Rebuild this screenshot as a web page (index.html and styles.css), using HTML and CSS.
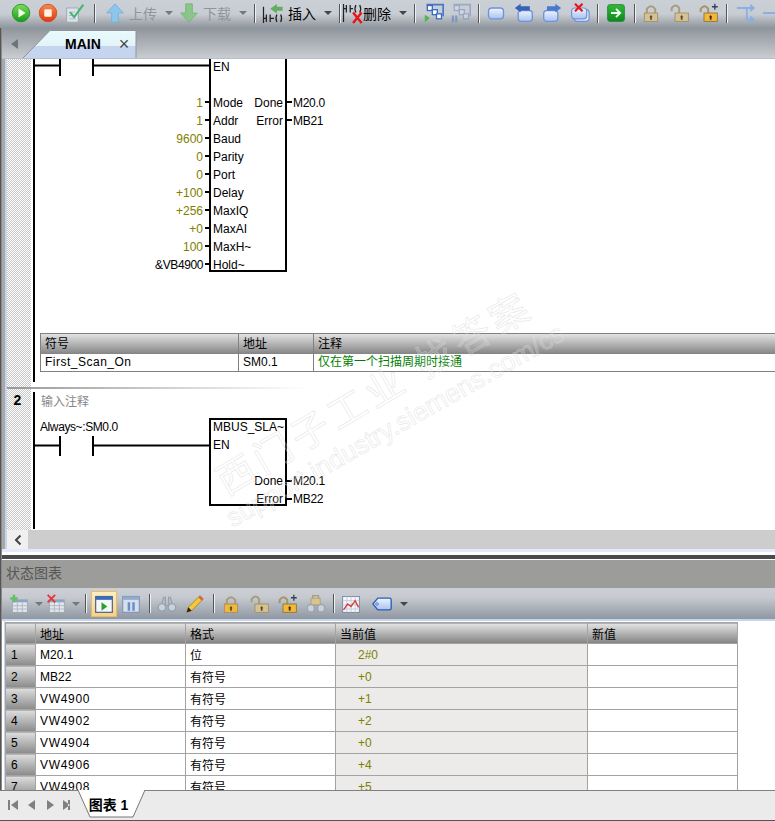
FILE: index.html
```html
<!DOCTYPE html>
<html lang="zh">
<head>
  <meta charset="UTF-8" />
  <title>MAIN</title>
  <link rel="stylesheet" href="styles.css">
</head>
<body>
  <!-- общие иконки -->
  <svg class="defs" aria-hidden="true">
    <defs>
      <linearGradient id="gGreen" x1="0" y1="0" x2="0" y2="1"><stop offset="0" stop-color="#7fdc5a"/><stop offset="1" stop-color="#169a1f"/></linearGradient>
      <linearGradient id="gRed" x1="0" y1="0" x2="0" y2="1"><stop offset="0" stop-color="#f58a4c"/><stop offset="1" stop-color="#e0380f"/></linearGradient>
      <linearGradient id="gBox" x1="0" y1="0" x2="0" y2="1"><stop offset="0" stop-color="#eef4ff"/><stop offset="1" stop-color="#a9c3f0"/></linearGradient>
      <linearGradient id="gGo" x1="0" y1="0" x2="0" y2="1"><stop offset="0" stop-color="#35b83c"/><stop offset="1" stop-color="#0f8a1c"/></linearGradient>
      <linearGradient id="gMainTab" x1="0" y1="0" x2="0" y2="1"><stop offset="0" stop-color="#e9fbff"/><stop offset=".55" stop-color="#e4f3f8"/><stop offset=".56" stop-color="#c5d5f0"/><stop offset="1" stop-color="#c5d5f0"/></linearGradient>

      <symbol id="i-play" viewBox="0 0 24 24"><circle cx="12" cy="12" r="10.5" fill="url(#gGreen)" stroke="#1f8f22"/><path d="M9 6.5 17.5 12 9 17.5Z" fill="#f2ffe8"/></symbol>
      <symbol id="i-stop" viewBox="0 0 24 24"><circle cx="12" cy="12" r="10.5" fill="url(#gRed)" stroke="#cf4a16"/><rect x="7.5" y="7.5" width="9" height="9" rx="1.5" fill="#fff1e6"/></symbol>
      <symbol id="i-check" viewBox="0 0 24 24"><path d="M2 6H16V23H2Z" fill="#dde3ec" stroke="#98a2b0"/><path d="M5 11H12M5 15H12M5 19H13" stroke="#a9b3c0"/><path d="M6 11 11 17 22 2" fill="none" stroke="#43b86c" stroke-width="2.4"/></symbol>
      <symbol id="i-up" viewBox="0 0 24 24"><path d="M12 1 22 12H16V23H8V12H2Z" fill="#8cc6ec" stroke="#74aed8"/></symbol>
      <symbol id="i-down" viewBox="0 0 24 24"><path d="M8 1H16V12H22L12 23 2 12H8Z" fill="#8ac58a" stroke="#77b377"/></symbol>
      <symbol id="i-insert" viewBox="0 0 24 22"><path d="M1 4V21M1 16H4M4 12V20M8 12V20M8 16H12" fill="none" stroke="#222" stroke-width="1.3"/><path d="M15 12Q13 16 15 20M19 12Q21 16 19 20" fill="none" stroke="#222" stroke-width="1.3"/><path d="M15 1 8 6 15 11V8H21V4H15Z" fill="#62ad5f"/></symbol>
      <symbol id="i-delete" viewBox="0 0 24 22"><path d="M1 1V20M1 6H4M4 2V10M8 2V10M8 6H11M14 2Q12 6 14 10M18 2Q20 6 18 10" fill="none" stroke="#222" stroke-width="1.3"/><path d="M11 10 20 21M20 10 11 21" stroke="#e8141c" stroke-width="2.6"/></symbol>
      <symbol id="i-net" viewBox="0 0 24 24"><path d="M3 2H23V16" fill="none" stroke="#4677cc" stroke-width="2"/><rect x="4" y="3" width="6" height="6" fill="#fff" stroke="#3a6cc4" stroke-width="1.6"/><rect x="10" y="8" width="6" height="6" fill="#fff" stroke="#3a6cc4" stroke-width="1.6"/><rect x="15" y="13" width="6" height="6" fill="#fff" stroke="#3a6cc4" stroke-width="1.6"/><path d="M1 14 7 18 1 23Z" fill="#4cb54c"/></symbol>
      <symbol id="i-net-off" viewBox="0 0 24 24"><g opacity=".6"><path d="M3 2H23V16" fill="none" stroke="#7c94bc" stroke-width="2"/><rect x="4" y="3" width="6" height="6" fill="#d8dfea" stroke="#7c94bc" stroke-width="1.6"/><rect x="10" y="8" width="6" height="6" fill="#d8dfea" stroke="#7c94bc" stroke-width="1.6"/><rect x="15" y="13" width="6" height="6" fill="#d8dfea" stroke="#7c94bc" stroke-width="1.6"/><path d="M1 15H3.6V23H1ZM5 15H7.6V23H5Z" fill="#5b83c4"/></g></symbol>
      <symbol id="i-box" viewBox="0 0 24 24"><rect x="3" y="6" width="18" height="13" rx="4" fill="url(#gBox)" stroke="#6f93d6" stroke-width="1.6"/></symbol>
      <symbol id="i-box-left" viewBox="0 0 24 24"><rect x="5" y="9" width="17" height="13" rx="4" fill="url(#gBox)" stroke="#6f93d6" stroke-width="1.6"/><path d="M1 6 8 1V4H19V9H8V11Z" fill="#3562b8"/></symbol>
      <symbol id="i-box-right" viewBox="0 0 24 24"><rect x="2" y="9" width="17" height="13" rx="4" fill="url(#gBox)" stroke="#6f93d6" stroke-width="1.6"/><path d="M23 6 16 1V4H6V9H16V11Z" fill="#4a78cc"/></symbol>
      <symbol id="i-box-del" viewBox="0 0 24 24"><rect x="5" y="8" width="18" height="14" rx="4" fill="#d8e4f8" stroke="#6f93d6" stroke-width="1.4"/><rect x="2" y="6" width="18" height="13" rx="4" fill="url(#gBox)" stroke="#6f93d6" stroke-width="1.4"/><path d="M6 1 15 10M15 1 6 10" stroke="#e8141c" stroke-width="2.6"/></symbol>
      <symbol id="i-go" viewBox="0 0 24 24"><rect x="2" y="2" width="20" height="20" rx="2.5" fill="url(#gGo)" stroke="#138024"/><path d="M6 12H16M12 7 17 12 12 17" fill="none" stroke="#f2fff2" stroke-width="2.2"/></symbol>
      <symbol id="i-lock" viewBox="0 0 24 24"><path d="M7 13V7Q12 1 17 7V13" fill="none" stroke="#a99c7c" stroke-width="2.4"/><rect x="4" y="12" width="16" height="10" fill="currentColor" stroke="#a08c5c"/><path d="M12 14.5 14 17H13V20H11V17H10Z" fill="#5b4a20"/></symbol>
      <symbol id="i-lock-open" viewBox="0 0 24 24"><path d="M2 10V6Q7 0 11 6V13" fill="none" stroke="#a99c7c" stroke-width="2.4"/><rect x="6" y="12" width="16" height="10" fill="currentColor" stroke="#a08c5c"/><path d="M14 14.5 16 17H15V20H13V17H12Z" fill="#5b4a20"/></symbol>
      <symbol id="i-lock-plus" viewBox="0 0 24 24"><path d="M2 11V7Q7 1 11 7V13" fill="none" stroke="#a5956d" stroke-width="2.4"/><rect x="6" y="12" width="16" height="10" fill="currentColor" stroke="#8a7136"/><path d="M14 14.5 16 17H15V20H13V17H12Z" fill="#3d2c06"/><path d="M19 1V8M15.5 4.5H22.5" stroke="#33415c" stroke-width="1.6"/></symbol>
      <symbol id="i-branch" viewBox="0 0 24 24"><path d="M1 6H13V20H19M13 6H19" fill="none" stroke="#8daee2" stroke-width="2.2"/><path d="M17 1 23 6 17 11ZM17 15 23 20 17 25Z" fill="#8daee2"/></symbol>
      <symbol id="i-table-add" viewBox="0 0 24 24"><rect x="4" y="7" width="18" height="15" fill="#e3e7ec" stroke="#9aa4b0"/><rect x="4" y="7" width="18" height="3" fill="#8ea6c4"/><path d="M4 14H22M4 18H22M10 10V22M16 10V22" stroke="#aab2bc"/><path d="M6 1V10M1.5 5.5H10.5" stroke="#66bf66" stroke-width="3"/></symbol>
      <symbol id="i-table-del" viewBox="0 0 24 24"><rect x="4" y="7" width="18" height="15" fill="#e3e7ec" stroke="#9aa4b0"/><rect x="4" y="7" width="18" height="3" fill="#8ea6c4"/><path d="M4 14H22M4 18H22M10 10V22M16 10V22" stroke="#aab2bc"/><path d="M2 1 11 10M11 1 2 10" stroke="#e8383c" stroke-width="2.4"/></symbol>
      <symbol id="i-win-play" viewBox="0 0 24 24"><rect x="2" y="3" width="20" height="19" fill="#f4f7fc" stroke="#44628e" stroke-width="1.4"/><rect x="2" y="3" width="20" height="4" fill="#3c6cb8"/><path d="M9 10 16 15 9 20Z" fill="#2aa22a"/></symbol>
      <symbol id="i-win-pause" viewBox="0 0 24 24"><rect x="2" y="3" width="20" height="19" fill="#d6dfec" stroke="#7f96b8" stroke-width="1.4"/><rect x="2" y="3" width="20" height="4" fill="#92aad0"/><path d="M8 10H11V20H8ZM13.5 10H16.5V20H13.5Z" fill="#6b8ec6"/></symbol>
      <symbol id="i-binoc" viewBox="0 0 24 24"><g fill="none" stroke="#98a2ae" stroke-width="1.6"><circle cx="6" cy="16" r="4.5" fill="#c9d2dc"/><circle cx="18" cy="16" r="4.5" fill="#c9d2dc"/><path d="M6 11 8 4H10V14H14V4H16L18 11"/></g></symbol>
      <symbol id="i-binoc-lock" viewBox="0 0 24 24"><g fill="none" stroke="#9aa3ae" stroke-width="1.6"><circle cx="6" cy="17" r="4.5" fill="#c9d2dc"/><circle cx="18" cy="17" r="4.5" fill="#c9d2dc"/><path d="M10 13H14V22H10Z"/></g><rect x="6" y="5" width="11" height="8" fill="#d9c48c" stroke="#a99c7c"/><path d="M8 5V2H15V5" fill="none" stroke="#a99c7c" stroke-width="1.6"/></symbol>
      <symbol id="i-pencil" viewBox="0 0 24 24"><path d="M18 2 22 6 8 20 2 22 4 16Z" fill="#f2c93c" stroke="#a8801c"/><path d="M18 2 22 6 20 8 16 4Z" fill="#d8604c"/><path d="M4 16 2 22 8 20Z" fill="#222"/></symbol>
      <symbol id="i-chart" viewBox="0 0 24 24"><rect x="2" y="3" width="20" height="19" fill="#f4f6fa" stroke="#6d7f9c"/><path d="M2 8H22M2 13H22M2 18H22M7 3V22M12 3V22M17 3V22" stroke="#c0c8d6"/><path d="M3 19 8 12 12 15 17 8 21 16" fill="none" stroke="#d83838" stroke-width="1.6"/></symbol>
      <symbol id="i-tag" viewBox="0 0 24 24"><path d="M7 5H21Q23 5 23 7V17Q23 19 21 19H7L1 12Z" fill="url(#gBox)" stroke="#2c5cb4" stroke-width="1.6"/><circle cx="6" cy="12" r="1.5" fill="#fff" stroke="#2c5cb4"/></symbol>
    </defs>
  </svg>

  <div class="toolbar main-bar">
    <span class="btn w27"><svg class="ico"><use href="#i-play"/></svg></span>
    <span class="btn w27"><svg class="ico"><use href="#i-stop"/></svg></span>
    <span class="btn w27"><svg class="ico"><use href="#i-check"/></svg></span>
    <span class="sep w13"></span>
    <span class="btn w28"><svg class="ico"><use href="#i-up"/></svg></span>
    <span class="label off">上传</span><span class="caret off"></span>
    <span class="btn w28"><svg class="ico"><use href="#i-down"/></svg></span>
    <span class="label off">下载</span><span class="caret off"></span>
    <span class="sep w11"></span>
    <span class="btn w28"><svg class="ico ico-wide"><use href="#i-insert"/></svg></span>
    <span class="label">插入</span><span class="caret"></span>
    <span class="sep w11"></span>
    <span class="btn w18"><svg class="ico ico-wide"><use href="#i-delete"/></svg></span>
    <span class="label">删除</span><span class="caret"></span>
    <span class="sep w11"></span>
    <span class="btn w27"><svg class="ico"><use href="#i-net"/></svg></span>
    <span class="btn w27"><svg class="ico"><use href="#i-net-off"/></svg></span>
    <span class="sep w8"></span>
    <span class="btn w28"><svg class="ico"><use href="#i-box"/></svg></span>
    <span class="btn w28"><svg class="ico"><use href="#i-box-left"/></svg></span>
    <span class="btn w28"><svg class="ico"><use href="#i-box-right"/></svg></span>
    <span class="btn w28"><svg class="ico"><use href="#i-box-del"/></svg></span>
    <span class="sep w6"></span>
    <span class="btn w32"><svg class="ico"><use href="#i-go"/></svg></span>
    <span class="sep w5"></span>
    <span class="btn w28 tan"><svg class="ico"><use href="#i-lock"/></svg></span>
    <span class="btn w29 tan"><svg class="ico"><use href="#i-lock-open"/></svg></span>
    <span class="btn w29 gold"><svg class="ico"><use href="#i-lock-plus"/></svg></span>
    <span class="sep w6"></span>
    <span class="btn w34"><svg class="ico"><use href="#i-branch"/></svg></span>
    <span class="dash"></span>
  </div>

  <div class="tab-strip">
    <span class="strip-arrow"></span>
    <div class="main-tab">
      <svg class="tab-shape" viewBox="0 0 114 28"><path d="M0 28 27 .5H113V28" fill="url(#gMainTab)" stroke="#8f949c"/></svg>
      <span class="tab-name">MAIN</span>
      <span class="tab-close">×</span>
    </div>
  </div>

  <div class="editor">
    <div class="net net-one">
      <div class="gutter"></div>
      <div class="rail rail-one">
        <div class="pin">
          <div class="pin-in"><svg class="rung" viewBox="0 0 174 20"><path d="M0 8.5H25M25 0V19M58 0V19M58 8.5H174" fill="none" stroke="#000" stroke-width="2"/></svg></div>
          <div class="pin-box"><span>EN</span></div>
        </div>
        <div class="pin"><div class="pin-in"></div><div class="pin-box"></div></div>
        <div class="pin">
          <div class="pin-in wired val">1</div>
          <div class="pin-box"><span>Mode</span><span>Done</span></div>
          <div class="pin-out wired">M20.0</div>
        </div>
        <div class="pin">
          <div class="pin-in wired val">1</div>
          <div class="pin-box"><span>Addr</span><span>Error</span></div>
          <div class="pin-out wired">MB21</div>
        </div>
        <div class="pin"><div class="pin-in wired val">9600</div><div class="pin-box"><span>Baud</span></div></div>
        <div class="pin"><div class="pin-in wired val">0</div><div class="pin-box"><span>Parity</span></div></div>
        <div class="pin"><div class="pin-in wired val">0</div><div class="pin-box"><span>Port</span></div></div>
        <div class="pin"><div class="pin-in wired val">+100</div><div class="pin-box"><span>Delay</span></div></div>
        <div class="pin"><div class="pin-in wired val">+256</div><div class="pin-box"><span>MaxIQ</span></div></div>
        <div class="pin"><div class="pin-in wired val">+0</div><div class="pin-box"><span>MaxAI</span></div></div>
        <div class="pin"><div class="pin-in wired val">100</div><div class="pin-box"><span>MaxH~</span></div></div>
        <div class="pin pin-last"><div class="pin-in wired pin-addr">&amp;VB4900</div><div class="pin-box"><span>Hold~</span></div></div>

        <div class="symbols">
          <div class="sym-head">符号</div><div class="sym-head">地址</div><div class="sym-head">注释</div>
          <div class="sym-cell sym-name">First_Scan_On</div><div class="sym-cell">SM0.1</div><div class="sym-cell sym-note">仅在第一个扫描周期时接通</div>
        </div>
      </div>
    </div>

    <div class="net-sep"></div>

    <div class="net net-two">
      <div class="gutter"><span class="net-no">2</span></div>
      <div class="rail rail-two">
        <div class="comment">输入注释</div>
        <div class="pin pin-title">
          <div class="pin-in pin-sym">Always~:SM0.0</div>
          <div class="pin-box"><span>MBUS_SLA~</span></div>
        </div>
        <div class="pin">
          <div class="pin-in"><svg class="rung" viewBox="0 0 174 20"><path d="M0 9.5H25M25 0V20M58 0V20M58 9.5H174" fill="none" stroke="#000" stroke-width="2"/></svg></div>
          <div class="pin-box"><span>EN</span></div>
        </div>
        <div class="pin"><div class="pin-in"></div><div class="pin-box"></div></div>
        <div class="pin">
          <div class="pin-in"></div>
          <div class="pin-box pin-right"><span>Done</span></div>
          <div class="pin-out wired">M20.1</div>
        </div>
        <div class="pin pin-end">
          <div class="pin-in"></div>
          <div class="pin-box pin-right"><span>Error</span></div>
          <div class="pin-out wired">MB22</div>
        </div>
      </div>
    </div>
  </div>

  <div class="hscroll">
    <div class="hscroll-btn"><svg viewBox="0 0 10 12" width="10" height="12"><path d="M7.5 1.5 3 6 7.5 10.5" fill="none" stroke="#444" stroke-width="2"/></svg></div>
  </div>
  <div class="splitter"></div>

  <div class="panel-title">状态图表</div>

  <div class="toolbar status-bar">
    <span class="btn w26"><svg class="ico"><use href="#i-table-add"/></svg></span>
    <span class="caret off c-status"></span>
    <span class="btn w26"><svg class="ico"><use href="#i-table-del"/></svg></span>
    <span class="caret off c-status"></span>
    <span class="sep w11"></span>
    <span class="btn active"><svg class="ico"><use href="#i-win-play"/></svg></span>
    <span class="btn w28"><svg class="ico"><use href="#i-win-pause"/></svg></span>
    <span class="sep w8"></span>
    <span class="btn w28"><svg class="ico"><use href="#i-binoc"/></svg></span>
    <span class="btn w28"><svg class="ico"><use href="#i-pencil"/></svg></span>
    <span class="sep w8"></span>
    <span class="btn w28 gold"><svg class="ico"><use href="#i-lock"/></svg></span>
    <span class="btn w29 tan"><svg class="ico"><use href="#i-lock-open"/></svg></span>
    <span class="btn w28 gold"><svg class="ico"><use href="#i-lock-plus"/></svg></span>
    <span class="btn w27"><svg class="ico"><use href="#i-binoc-lock"/></svg></span>
    <span class="sep w8"></span>
    <span class="btn w28"><svg class="ico"><use href="#i-chart"/></svg></span>
    <span class="btn w30"><svg class="ico"><use href="#i-tag"/></svg></span>
    <span class="caret c-status"></span>
  </div>

  <div class="grid-wrap">
    <table class="status-grid">
      <colgroup><col class="col-no"><col class="col-wide"><col class="col-wide"><col class="col-value"><col class="col-wide"></colgroup>
      <thead>
        <tr><th></th><th>地址</th><th>格式</th><th>当前值</th><th>新值</th></tr>
      </thead>
      <tbody>
        <tr><th>1</th><td>M20.1</td><td>位</td><td class="cur">2#0</td><td></td></tr>
        <tr><th>2</th><td>MB22</td><td>有符号</td><td class="cur">+0</td><td></td></tr>
        <tr><th>3</th><td class="vw">VW4900</td><td>有符号</td><td class="cur">+1</td><td></td></tr>
        <tr><th>4</th><td class="vw">VW4902</td><td>有符号</td><td class="cur">+2</td><td></td></tr>
        <tr><th>5</th><td class="vw">VW4904</td><td>有符号</td><td class="cur">+0</td><td></td></tr>
        <tr><th>6</th><td class="vw">VW4906</td><td>有符号</td><td class="cur">+4</td><td></td></tr>
        <tr><th>7</th><td class="vw">VW4908</td><td>有符号</td><td class="cur">+5</td><td></td></tr>
      </tbody>
    </table>
  </div>

  <div class="sheet-bar">
    <svg class="sheet-nav" viewBox="0 0 64 12" width="64" height="12">
      <path d="M1 1H3V11H1ZM11 1V11L4 6Z M28 1V11L21 6Z M40 1V11L47 6Z M56 1V11L63 6ZM61 1H63V11H61Z" fill="#808080"/>
    </svg>
    <div class="sheet-tab">
      <svg class="tab-shape" viewBox="0 0 68 28"><path d="M0 0 12 27H55L67 0" fill="#fff" stroke="#777"/></svg>
      <span class="sheet-name">图表 1</span>
    </div>
  </div>

  <div class="edge"></div>

  <!-- водяной знак поверх всего -->
  <div class="watermark wm-cn">西门子工业 找答案</div>
  <div class="watermark wm-url">support.industry.siemens.com/cs</div>
</body>
</html>
```

FILE: styles.css
```css
body {
  margin: 0;
  width: 775px;
  height: 821px;
  overflow: hidden;
  position: relative;
  background-color: white;
  font-family: "Liberation Sans", "Noto Sans CJK SC", sans-serif;
  font-size: 12px;
  color: #000;
}

.defs {
  position: absolute;
  width: 0;
  height: 0;
}

/* Тёмная кромка окна слева */
.edge {
  position: absolute;
  left: 0;
  top: 28px;
  bottom: 31px;
  width: 2px;
  background: linear-gradient(90deg, #555 50%, #8a8a8a 50%);
}

/* Панели инструментов */
.toolbar {
  display: flex;
  align-items: center;
  overflow: hidden;
}

.main-bar {
  height: 28px;
  padding: 0 0 2px 7px;
  box-sizing: border-box;
  background: linear-gradient(#cbd0d6, #c8ccd3 50%, #8f959c);
}

.status-bar {
  height: 33px;
  padding-left: 6px;
  box-sizing: border-box;
  border-bottom: 2px solid #c5d5ee;
  background: linear-gradient(#ccd0d6, #c6cad0 30%, #8f97a1);
}

.btn {
  display: flex;
  align-items: center;
  justify-content: center;
  flex: none;
}

.ico {
  width: 20px;
  height: 20px;
}

.ico-wide {
  flex: none;
  width: 24px;
  height: 21px;
}

.w18 { width: 18px; }
.w26 { width: 26px; }
.w27 { width: 27px; }
.w28 { width: 28px; }
.w29 { width: 29px; }
.w30 { width: 30px; margin-left: 2px; }
.w32 { width: 32px; }
.w34 { width: 34px; }

.tan { color: #d3c296; }
.gold { color: #f2b83a; }

.active {
  width: 24px;
  height: 24px;
  border: 1px solid #e8bc68;
  background: linear-gradient(#fdeec2, #fbd27e);
}

.sep {
  flex: none;
  height: 19px;
  display: flex;
  justify-content: center;
}

.sep::before {
  content: "";
  width: 1px;
  background-color: #555;
  box-shadow: 1px 0 0 #eef0f3;
}

.sep.w5 { width: 5px; }
.sep.w6 { width: 6px; }
.sep.w8 { width: 8px; }
.sep.w11 { width: 11px; }
.sep.w13 { width: 13px; }

.label {
  width: 28px;
  flex: none;
  font-size: 14px;
}

.label.off {
  color: #8e959d;
}

.caret {
  flex: none;
  width: 0;
  height: 0;
  margin: 0 2px 0 8px;
  border-left: 4.5px solid transparent;
  border-right: 4.5px solid transparent;
  border-top: 4px solid #444;
}

.caret.off {
  border-top-color: #777;
}

.c-status {
  margin: 0 0 0 3px;
}

.dash {
  flex: none;
  width: 12px;
  height: 2px;
  background-color: #8daee2;
}

/* Вкладка MAIN */
.tab-strip {
  height: 31px;
  display: flex;
  align-items: flex-end;
  box-sizing: border-box;
  border-bottom: 1px solid #b4bdd2;
  background: linear-gradient(#8f959c, #c9ccd1);
}

.strip-arrow {
  width: 0;
  height: 0;
  margin: 0 5px 9px 11px;
  border-top: 5px solid transparent;
  border-bottom: 5px solid transparent;
  border-right: 7px solid #6f747b;
}

.main-tab {
  position: relative;
  width: 114px;
  height: 28px;
  display: flex;
  align-items: center;
}

.tab-shape {
  position: absolute;
  left: 0;
  top: 0;
  width: 100%;
  height: 100%;
}

.tab-name {
  position: relative;
  margin-left: 42px;
  font-size: 14px;
  font-weight: bold;
}

.tab-close {
  position: relative;
  margin-left: 18px;
  font-size: 18px;
  color: #444;
}

/* Лестничная диаграмма */
.editor {
  height: 471px;
  overflow: hidden;
  padding-left: 7px;
  background: linear-gradient(90deg, #a8a8a8 5px, #c5d5ee 5px);
}

.net {
  display: flex;
  background-color: white;
}

.net-one {
  height: 328px;
}

.net-two {
  height: 141px;
}

.gutter {
  flex: none;
  width: 24px;
  margin-right: 2px;
  background-color: #fff;
  background-image: conic-gradient(#c8c8c8 25%, #fff 0 50%, #c8c8c8 0 75%, #fff 0);
  background-size: 2px 2px;
  text-align: center;
}

.net-no {
  display: block;
  padding-top: 3px;
  padding-right: 3px;
  font-size: 14px;
  line-height: 16px;
  font-weight: bold;
}

.rail {
  flex: 1;
  border-left: 2px solid #000;
}

.rail-one {
  height: 323px;
  overflow: hidden;
}

.rail-two {
  height: 137px;
  margin-top: 3px;
}

.net-sep {
  height: 2px;
  background: linear-gradient(90deg, #999, #fff 300px);
}

.pin {
  display: grid;
  grid-template-columns: 174px 78px 1fr;
  grid-template-rows: 100%;
  height: 18px;
  line-height: 18px;
}

.rail-one .pin {
  line-height: 20px;
}

.rail-one .pin:first-child {
  margin-top: -2px;
}

.pin-in {
  position: relative;
  padding-right: 6px;
  text-align: right;
}

.pin-addr {
  letter-spacing: -0.4px;
}

.val {
  color: #808000;
}

.pin-box {
  display: flex;
  justify-content: space-between;
  box-sizing: border-box;
  padding: 0 2px;
  border-left: 2px solid #000;
  border-right: 2px solid #000;
}

.pin-right {
  justify-content: flex-end;
}

.pin-title .pin-box {
  border-top: 2px solid #000;
  line-height: 15px;
}

.pin-last {
  height: 17px;
}

.pin-end {
  height: 16px;
}

.pin-last .pin-box,
.pin-end .pin-box {
  border-bottom: 2px solid #000;
}

.pin-out {
  position: relative;
  padding-left: 6px;
  letter-spacing: -0.3px;
}

.wired::after {
  content: "";
  position: absolute;
  top: 8px;
  width: 5px;
  height: 2px;
  background-color: #000;
}

.pin-in.wired::after {
  right: 0;
  width: 4px;
}

.pin-out.wired::after {
  left: 0;
}

.rung {
  position: absolute;
  left: 0;
  top: 0;
  width: 174px;
  height: 20px;
}

.pin-sym {
  padding-left: 5px;
  text-align: left;
  letter-spacing: -0.4px;
}

.comment {
  height: 26px;
  padding-left: 6px;
  line-height: 20px;
  color: #888;
}

/* Таблица символов */
.symbols {
  display: grid;
  grid-template-columns: 198px 75px 470px;
  margin: 61px 0 0 5px;
  border: solid #808080;
  border-width: 1px 0 1px 1px;
}

.sym-head {
  height: 20px;
  padding-left: 4px;
  line-height: 20px;
  border-right: 1px solid #808080;
  background: linear-gradient(#e2e2e4, #848484);
}

.sym-cell {
  height: 17px;
  padding-left: 4px;
  line-height: 17px;
  border-right: 1px solid #808080;
}

.sym-name {
  letter-spacing: 0.5px;
}

.sym-note {
  color: #008000;
}

/* Полоса прокрутки и разделитель */
.hscroll {
  height: 19px;
  display: flex;
  padding-left: 7px;
  background: linear-gradient(90deg, #a8a8a8 5px, #c5d5ee 5px 7px, #cdcdcd 7px);
}

.hscroll-btn {
  width: 21px;
  display: flex;
  align-items: center;
  justify-content: center;
  background-color: #f0f0f0;
}

.splitter {
  height: 11px;
  box-sizing: border-box;
  border-top: 3px solid #e4ebf8;
  border-bottom: 1px solid #fff;
  background: linear-gradient(#fff 3px, #4a4a4a 3px);
}

/* Нижняя панель */
.panel-title {
  height: 28px;
  padding-left: 6px;
  line-height: 27px;
  font-size: 14px;
  color: #565656;
  background-color: #9c9d9b;
}

.grid-wrap {
  height: 169px;
  overflow: hidden;
  padding-left: 5px;
  box-sizing: border-box;
  background: linear-gradient(90deg, #fff 4px, #c5d5ee 4px 5px, #fff 5px);
}

.status-grid {
  width: 733px;
  margin-top: 1px;
  table-layout: fixed;
  border-collapse: collapse;
}

.col-no { width: 30px; }
.col-wide { width: 150px; }
.col-value { width: 252px; }

.status-grid th,
.status-grid td {
  height: 21px;
  padding: 0 0 0 4px;
  border: 1px solid #a3a3a3;
  font-weight: normal;
  text-align: left;
}

.status-grid thead th {
  height: 20px;
  background: linear-gradient(#e4e4e4, #828282);
}

.status-grid tbody th {
  padding-left: 5px;
  background: linear-gradient(#dedede, #8a8a8a);
}

.status-grid .cur {
  padding-left: 22px;
  color: #808000;
  background-color: #ecebe9;
}

.status-grid .vw {
  letter-spacing: 0.7px;
}

/* Листы внизу */
.sheet-bar {
  height: 31px;
  display: flex;
  box-sizing: border-box;
  border-top: 1px solid #808080;
  border-bottom: 1px solid #555;
  background-color: #ebebeb;
}

.sheet-nav {
  flex: none;
  margin: 8px 0 0 7px;
}

.sheet-tab {
  position: relative;
  width: 68px;
  height: 28px;
  margin: -1px 0 0 7px;
  display: flex;
  justify-content: center;
  align-items: center;
  box-sizing: border-box;
  padding-right: 7px;
}

.sheet-name {
  position: relative;
  font-size: 14px;
  font-weight: bold;
}

/* Водяной знак */
.watermark {
  position: absolute;
  white-space: pre;
  transform-origin: 0 50%;
  color: rgba(255, 255, 255, 0.18);
  -webkit-text-stroke: 0.7px rgba(210, 210, 210, 0.5);
  pointer-events: none;
}

.wm-cn {
  left: 220px;
  top: 463px;
  font-size: 38px;
  line-height: 44px;
  letter-spacing: 5px;
  transform: rotate(-30.5deg);
}

.wm-url {
  left: 228px;
  top: 505px;
  font-size: 26.5px;
  line-height: 30px;
  transform: rotate(-29.5deg);
}
```
